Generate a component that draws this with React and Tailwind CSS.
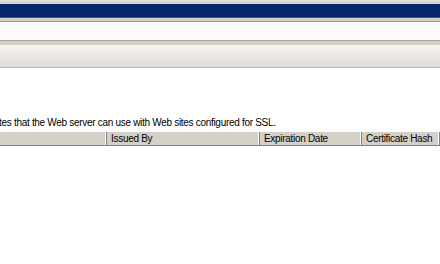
import React from "react";

function Header({ children, className }) {
  return (
    <div
      className={
        "h-full flex items-center pl-[4px] border-r border-r-[#808080] shadow-[inset_-1px_0_0_#ffffff] " +
        className
      }
    >
      {children}
    </div>
  );
}

export default function App() {
  return (
    <div className="w-[440px] h-[264px] overflow-hidden bg-white text-[10px] tracking-[-0.3px] text-black font-['Tahoma','Liberation_Sans',sans-serif]">
      <div className="h-[4px] bg-[#d6d3ce] border-t border-t-[#e4e2dd]" />
      <div className="h-[14px] bg-[#08246b] border-b border-b-[#3a5a93]" />
      <div className="h-[4px] bg-[#d4d0c8] border-b border-b-[#a09d96]" />
      <div className="h-[18px] bg-[#fdfafd]" />
      <div className="h-[5px] bg-[#d4d0c8] border-t border-t-[#a5a29b]" />
      <div className="h-[23px] bg-gradient-to-b from-[#f6f3f3] to-[#e1ddd9] border-b border-b-[#b4b1ab]" />
      <div className="h-[48px]" />
      <div className="h-[13px] -ml-[1px] leading-[13px] whitespace-nowrap">
        tes that the Web server can use with Web sites configured for SSL.
      </div>
      <div className="mt-[2px] h-[15px] flex whitespace-nowrap bg-[#d4d0c8] border-t border-t-white border-b border-b-[#808080]">
        <Header className="w-[107px]" />
        <Header className="w-[153px]">Issued By</Header>
        <Header className="w-[102px]">Expiration Date</Header>
        <Header className="flex-1">Certificate Hash</Header>
      </div>
    </div>
  );
}
